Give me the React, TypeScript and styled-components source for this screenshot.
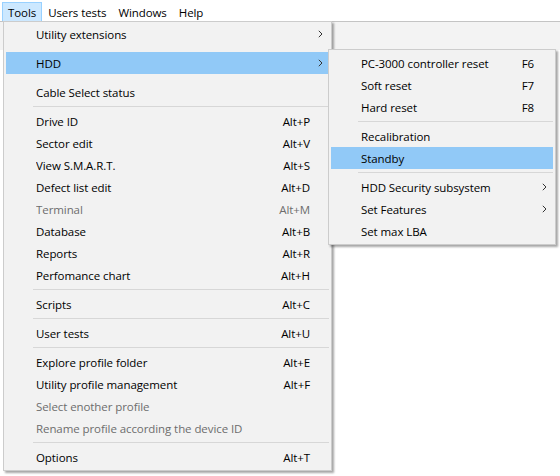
import React from "react";
import styled, {createGlobalStyle} from "styled-components";

type Entry =
    | {kind: "item"; label: string; shortcut?: string; submenu?: boolean; disabled?: boolean; active?: boolean}
    | {kind: "sep"; hidden?: boolean};

const item = (label: string, shortcut?: string, extra: Partial<Omit<Extract<Entry, {kind: "item"}>, "kind">> = {}): Entry =>
    ({kind: "item", label, shortcut, ...extra});
const sep = (hidden = false): Entry => ({kind: "sep", hidden});

const toolsMenu: Entry[] = [
    item("Utility extensions", undefined, {submenu: true}),
    sep(true),
    item("HDD", undefined, {submenu: true, active: true}),
    sep(true),
    item("Cable Select status"),
    sep(),
    item("Drive ID", "Alt+P"),
    item("Sector edit", "Alt+V"),
    item("View S.M.A.R.T.", "Alt+S"),
    item("Defect list edit", "Alt+D"),
    item("Terminal", "Alt+M", {disabled: true}),
    item("Database", "Alt+B"),
    item("Reports", "Alt+R"),
    item("Perfomance chart", "Alt+H"),
    sep(),
    item("Scripts", "Alt+C"),
    sep(),
    item("User tests", "Alt+U"),
    sep(),
    item("Explore profile folder", "Alt+E"),
    item("Utility profile management", "Alt+F"),
    item("Select enother profile", undefined, {disabled: true}),
    item("Rename profile according the device ID", undefined, {disabled: true}),
    sep(),
    item("Options", "Alt+T"),
];

const hddMenu: Entry[] = [
    item("PC-3000 controller reset", "F6"),
    item("Soft reset", "F7"),
    item("Hard reset", "F8"),
    sep(),
    item("Recalibration"),
    item("Standby", undefined, {active: true}),
    sep(),
    item("HDD Security subsystem", undefined, {submenu: true}),
    item("Set Features", undefined, {submenu: true}),
    item("Set max LBA"),
];

const Chevron = () => (
    <svg width="5" height="8" viewBox="0 0 5 8">
        <path d="M0.8 0.8 L4 4 L0.8 7.2" fill="none" stroke="#333" strokeWidth="1"/>
    </svg>
);

const MenuList = ({entries}: {entries: Entry[]}) => (
    <>
        {entries.map((e, i) =>
            e.kind === "sep" ? (
                <Separator key={i} $hidden={e.hidden}/>
            ) : (
                <MenuItem key={i} $active={e.active} $disabled={e.disabled}>
                    <span/>
                    <ItemLabel>{e.label}</ItemLabel>
                    <Shortcut>{e.shortcut}</Shortcut>
                    <ArrowCell>{e.submenu && <Chevron/>}</ArrowCell>
                </MenuItem>
            )
        )}
    </>
);

export default function App() {
    return (
        <>
            <GlobalStyle/>
            <Screen>
                <MenuBar>
                    <BarItem $open>Tools</BarItem>
                    <BarItem>Users tests</BarItem>
                    <BarItem>Windows</BarItem>
                    <BarItem>Help</BarItem>
                </MenuBar>
                <ToolStrip/>
                <Workspace/>
                <Dropdown $left={3} $top={21} $width={329} $padTop={1}>
                    <MenuList entries={toolsMenu}/>
                </Dropdown>
                <Dropdown $left={328} $top={49} $width={228} $padTop={2}>
                    <MenuList entries={hddMenu}/>
                </Dropdown>
            </Screen>
        </>
    );
}

const GlobalStyle = createGlobalStyle`
  html, body {
    margin: 0;
    padding: 0;
    background: #ffffff;
  }
  body {
    font-family: "Segoe UI", "Open Sans", "Noto Sans", sans-serif;
    font-size: 11.5px;
    letter-spacing: -0.08px;
    color: #000;
  }
`

const Screen = styled.div`
  position: relative;
  width: 560px;
  height: 476px;
  overflow: hidden;
  display: flex;
  flex-direction: column;
  background: #ffffff;
`

const MenuBar = styled.div`
  display: flex;
  align-items: stretch;
  height: 21px;
  padding: 2px 0 0 2px;
  box-sizing: border-box;
  background: #ffffff;
`

const BarItem = styled.div<{$open?: boolean}>`
  display: flex;
  align-items: center;
  padding: 1px 5px 0;
  border: 1px solid ${p => p.$open ? "#99d1ff" : "transparent"};
  border-bottom: none;
  background: ${p => p.$open ? "#cce8ff" : "transparent"};
  line-height: 18px;
`

const ToolStrip = styled.div`
  height: 28px;
  border-top: 1px solid #c4c4c4;
  background: #f3f3f3;
`

const Workspace = styled.div`
  flex: 1;
  background: #ffffff;
`

const Dropdown = styled.div<{$left: number; $top: number; $width: number; $padTop: number}>`
  position: absolute;
  left: ${p => p.$left}px;
  top: ${p => p.$top}px;
  width: ${p => p.$width}px;
  box-sizing: border-box;
  display: flex;
  flex-direction: column;
  padding: ${p => p.$padTop}px 2px 2px 2px;
  background: #f2f2f2;
  border: 1px solid #cccccc;
  box-shadow: 2px 2px 2px rgba(0, 0, 0, 0.35);
`

const MenuItem = styled.div<{$active?: boolean; $disabled?: boolean}>`
  display: grid;
  grid-template-columns: 30px 1fr auto 19px;
  align-items: center;
  height: 22px;
  background: ${p => p.$active ? "#91c9f7" : "transparent"};
  color: ${p => p.$disabled ? "#6d6d6d" : "#000000"};
  white-space: nowrap;
`

const ItemLabel = styled.span`
  overflow: hidden;
`

const Shortcut = styled.span`
  text-align: right;
`

const ArrowCell = styled.span`
  display: flex;
  align-items: center;
  justify-content: center;
  padding-left: 2px;
`

const Separator = styled.div<{$hidden?: boolean}>`
  height: 7px;
  display: flex;
  align-items: center;
  padding-left: 27px;

  &::after {
    content: "";
    flex: 1;
    height: 1px;
    background: ${p => p.$hidden ? "transparent" : "#d7d7d7"};
  }
`
